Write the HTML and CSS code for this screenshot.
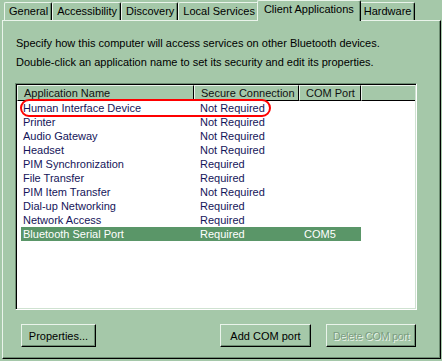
FILE: index.html
```html
<!DOCTYPE html>
<html lang="en">
<head>
    <meta charset="UTF-8">
    <title>Bluetooth Settings - Client Applications</title>
    <link rel="stylesheet" href="styles.css">
</head>
<body>

    <div class="dialog">
        <!-- Abas -->
        <div class="tabs">
            <div class="tab">General</div>
            <div class="tab">Accessibility</div>
            <div class="tab">Discovery</div>
            <div class="tab">Local Services</div>
            <div class="tab active">Client Applications</div>
            <div class="tab">Hardware</div>
        </div>

        <div class="panel">
            <p class="hint">Specify how this computer will access services on other Bluetooth devices.</p>
            <p class="hint">Double-click an application name to set its security and edit its properties.</p>

            <div class="listview">
                <div class="list-head">
                    <div class="col col-name">Application Name</div>
                    <div class="col col-sec">Secure Connection</div>
                    <div class="col col-port">COM Port</div>
                    <div class="col col-fill"></div>
                </div>
                <div class="list-body">
                    <div class="row"><span class="cell c-name">Human Interface Device</span><span class="cell c-sec">Not Required</span><span class="cell c-port"></span></div>
                    <div class="row"><span class="cell c-name">Printer</span><span class="cell c-sec">Not Required</span><span class="cell c-port"></span></div>
                    <div class="row"><span class="cell c-name">Audio Gateway</span><span class="cell c-sec">Not Required</span><span class="cell c-port"></span></div>
                    <div class="row"><span class="cell c-name">Headset</span><span class="cell c-sec">Not Required</span><span class="cell c-port"></span></div>
                    <div class="row"><span class="cell c-name">PIM Synchronization</span><span class="cell c-sec">Required</span><span class="cell c-port"></span></div>
                    <div class="row"><span class="cell c-name">File Transfer</span><span class="cell c-sec">Required</span><span class="cell c-port"></span></div>
                    <div class="row"><span class="cell c-name">PIM Item Transfer</span><span class="cell c-sec">Not Required</span><span class="cell c-port"></span></div>
                    <div class="row"><span class="cell c-name">Dial-up Networking</span><span class="cell c-sec">Required</span><span class="cell c-port"></span></div>
                    <div class="row"><span class="cell c-name">Network Access</span><span class="cell c-sec">Required</span><span class="cell c-port"></span></div>
                    <div class="row selected"><span class="cell c-name">Bluetooth Serial Port</span><span class="cell c-sec">Required</span><span class="cell c-port">COM5</span></div>
                </div>
                <!-- marcação vermelha por cima da primeira linha -->
                <span class="mark"></span>
            </div>

            <div class="buttons">
                <button class="btn btn-props">Properties...</button>
                <span class="spacer"></span>
                <button class="btn btn-add">Add COM port</button>
                <button class="btn btn-del" disabled>Delete COM port</button>
            </div>
        </div>
    </div>

</body>
</html>
```

FILE: styles.css
```css
body {
    margin: 0;
    padding: 0;
    background: #a5c8a9;
    font-family: 'Liberation Sans', Arial, sans-serif;
    font-size: 11px;
    color: #000;
    overflow: hidden;
}

.dialog {
    padding-left: 2px;
    width: 439px;
}

/* Abas */
.tabs {
    display: flex;
    align-items: flex-end;
    height: 20px;
    padding-left: 2px;
}

.tab {
    box-sizing: border-box;
    height: 18px;
    line-height: 16px;
    padding: 0 3px 0 4px;
    border-top: 1px solid #eaf4eb;
    border-left: 1px solid #eaf4eb;
    border-right: 1px solid #000;
    box-shadow: inset -1px 0 0 #6d8d72;
    border-radius: 2px 2px 0 0;
    white-space: nowrap;
}

.tab.active {
    height: 21px;
    line-height: 17px;
    margin: 0 -2px -1px -2px;
    padding: 0 6px;
    background: #a5c8a9;
    position: relative;
    z-index: 1;
}

/* Painel */
.panel {
    box-sizing: border-box;
    height: 339px;
    border-top: 1px solid #eaf4eb;
    border-left: 1px solid #eaf4eb;
    border-right: 1px solid #000;
    border-bottom: 1px solid #000;
    box-shadow: inset -1px -1px 0 #6d8d72;
    padding: 16px 0 0 12px;
}

.hint {
    margin: 0 0 6px 0;
    padding-left: 1px;
    line-height: 13px;
}

/* Lista */
.listview {
    position: relative;
    box-sizing: border-box;
    width: 402px;
    height: 227px;
    margin-top: 14px;
    border-top: 1px solid #6d8d72;
    border-left: 1px solid #6d8d72;
    border-right: 1px solid #fff;
    border-bottom: 1px solid #fff;
    box-shadow: inset 1px 1px 0 #000, inset -1px -1px 0 #cfe2d1;
    padding: 1px;
    background: #fff;
}

.list-head {
    display: flex;
    height: 16px;
    background: #a5c8a9;
}

.col {
    box-sizing: border-box;
    height: 16px;
    line-height: 14px;
    padding-left: 6px;
    border-top: 1px solid #eaf4eb;
    border-left: 1px solid #eaf4eb;
    border-right: 1px solid #000;
    border-bottom: 1px solid #000;
    white-space: nowrap;
    color: #111;
}

.col-name { width: 177px; }
.col-sec { width: 105px; }
.col-port { width: 62px; }
.col-fill { flex: 1; border-right: none; }

.row {
    display: flex;
    height: 14px;
    line-height: 14px;
    width: 340px;
    margin-left: 4px;
    color: #15155a;
}

.row.selected {
    background: #5a9668;
    color: #fff;
}

.cell {
    box-sizing: border-box;
    padding-left: 2px;
    white-space: nowrap;
}

.c-name { width: 173px; }
.c-sec { width: 105px; padding-left: 6px; }
.c-port { width: 62px; padding-left: 5px; }

.mark {
    position: absolute;
    left: 4px;
    top: 15px;
    width: 251px;
    height: 18px;
    box-sizing: border-box;
    border: 2px solid #f00;
    border-radius: 9px;
}

/* Botões */
.buttons {
    display: flex;
    width: 402px;
    margin-top: 14px;
    padding-left: 6px;
    box-sizing: border-box;
    gap: 15px;
}

.spacer {
    flex: 1;
}

.btn {
    box-sizing: border-box;
    height: 23px;
    background: #a5c8a9;
    font-family: 'Liberation Sans', Arial, sans-serif;
    font-size: 11px;
    color: #000;
    padding: 0;
    border-top: 1px solid #eaf4eb;
    border-left: 1px solid #eaf4eb;
    border-right: 1px solid #000;
    border-bottom: 1px solid #000;
    box-shadow: inset -1px -1px 0 #6d8d72;
    border-radius: 0;
    white-space: nowrap;
}

.btn-props { width: 75px; }
.btn-add { width: 91px; }
.btn-del {
    width: 90px;
    margin-right: 1px;
    color: #7c9e81;
    text-shadow: 1px 1px 0 #eaf4eb;
    letter-spacing: -0.4px;
}
```
